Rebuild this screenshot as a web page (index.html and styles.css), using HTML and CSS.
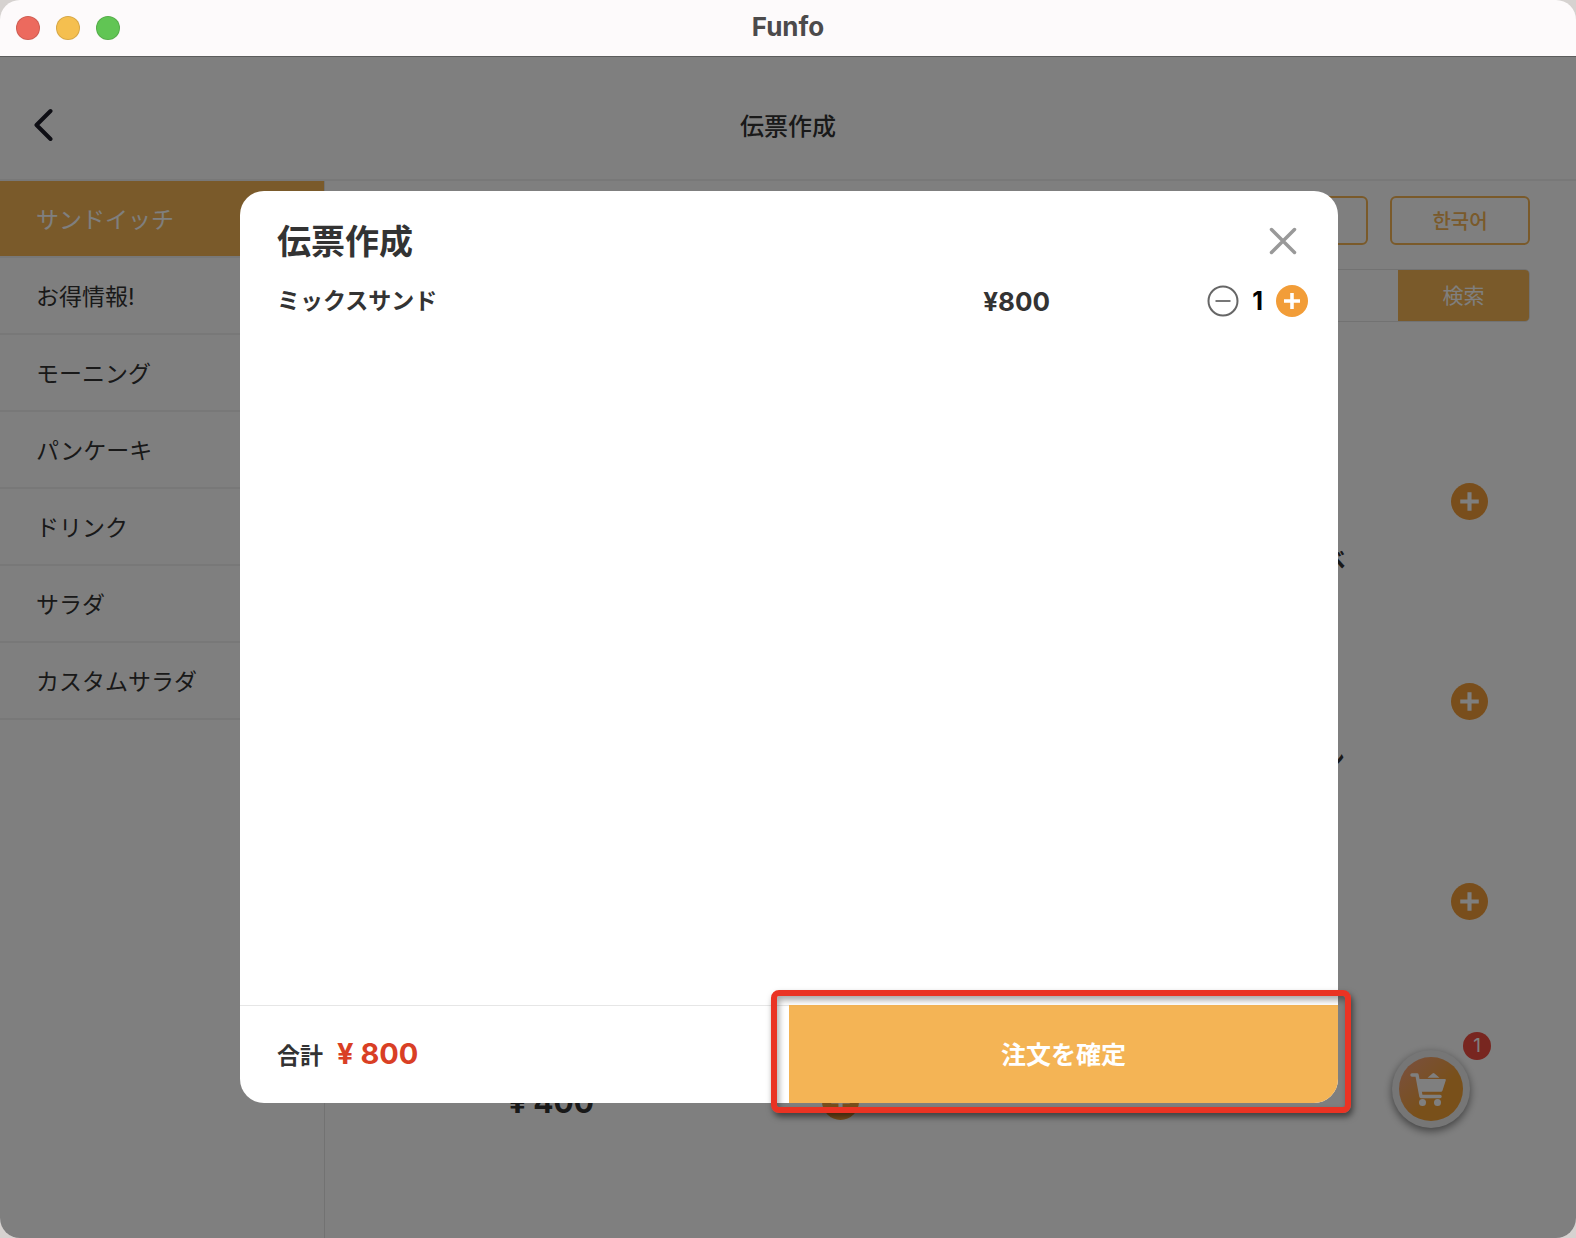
FILE: index.html
```html
<!DOCTYPE html>
<html lang="ja">
<head>
    <meta charset="UTF-8">
    <meta name="viewport" content="width=device-width, initial-scale=1.0">
    <title>Funfo</title>
    <link rel="stylesheet" href="styles.css">
</head>
<body>
    <svg class="sprite" aria-hidden="true">
        <symbol id="plus" viewBox="0 0 36 36">
            <circle cx="18" cy="18" r="18" fill="#f29d38"/>
            <path d="M18 9v18M9 18h18" stroke="#fff" stroke-width="4"/>
        </symbol>
    </svg>

    <div class="window">
        <div class="titlebar">
            <div class="lights">
                <span class="light red"></span>
                <span class="light yellow"></span>
                <span class="light green"></span>
            </div>
            <span class="app-name">Funfo</span>
        </div>

        <div class="app">
            <header class="header">
                <button class="back" aria-label="戻る">
                    <svg width="22" height="34" viewBox="0 0 22 34"><path d="M18.500 4L4.500 18l14 14" fill="none" stroke="#1c1c28" stroke-width="4" stroke-linecap="round" stroke-linejoin="round"/></svg>
                </button>
                <h1>伝票作成</h1>
            </header>

            <div class="main">
                <nav class="sidebar">
                    <a href="#" class="active">サンドイッチ</a>
                    <a href="#">お得情報!</a>
                    <a href="#">モーニング</a>
                    <a href="#">パンケーキ</a>
                    <a href="#">ドリンク</a>
                    <a href="#">サラダ</a>
                    <a href="#">カスタムサラダ</a>
                </nav>

                <div class="content">
                    <div class="langs">
                        <button class="lang">中文</button>
                        <button class="lang">한국어</button>
                    </div>
                    <form class="search">
                        <input type="text" aria-label="検索">
                        <button type="button">検索</button>
                    </form>

                    <div class="menu">
                        <div class="item">
                            <span class="name">ミックスサンド</span>
                            <span class="price">¥ 800</span>
                            <button class="add" aria-label="追加"><svg><use href="#plus"/></svg></button>
                        </div>
                        <div class="item">
                            <span class="name">ハムサンド</span>
                            <span class="price">¥ 400</span>
                            <button class="add" aria-label="追加"><svg><use href="#plus"/></svg></button>
                        </div>
                        <div class="item">
                            <span class="name">チキンサンド</span>
                            <span class="price">¥ 400</span>
                            <button class="add" aria-label="追加"><svg><use href="#plus"/></svg></button>
                        </div>
                        <div class="item">
                            <span class="name">ハムサンド食べ比べ</span>
                            <span class="price">¥ 800</span>
                            <button class="add" aria-label="追加"><svg><use href="#plus"/></svg></button>
                        </div>
                        <div class="item">
                            <span class="name">たまごサンド</span>
                            <span class="price">¥ 400</span>
                            <button class="add" aria-label="追加"><svg><use href="#plus"/></svg></button>
                        </div>
                        <div class="item">
                            <span class="name">ホットサンドチキン</span>
                            <span class="price">¥ 400</span>
                            <button class="add" aria-label="追加"><svg><use href="#plus"/></svg></button>
                        </div>
                        <div class="item">
                            <span class="name">野菜サンド</span>
                            <span class="price">¥ 400</span>
                            <button class="add" aria-label="追加"><svg><use href="#plus"/></svg></button>
                        </div>
                    </div>
                </div>
            </div>

            <button class="cart" aria-label="カート">
                <span class="cart-icon">
                    <svg width="36" height="34" viewBox="0 0 36 34" fill="#fff">
                        <path d="M2 3h5l4 21.500h19" fill="none" stroke="#fff" stroke-width="3.500" stroke-linecap="round" stroke-linejoin="round"/>
                        <path d="M8 7h27q1 0 .8 1.200L32.500 18.500q-.4 1.300-1.500 1.300H11z"/>
                        <path d="M17.500 5.800l5-4.300q1-1 2 0l5 4.300z"/>
                        <circle cx="12.500" cy="30.500" r="3.500"/>
                        <circle cx="27.500" cy="30.500" r="3.500"/>
                    </svg>
                </span>
                <span class="badge">1</span>
            </button>

            <div class="overlay">
                <div class="modal" role="dialog" aria-labelledby="modal-title">
                    <div class="modal-head">
                        <h2 id="modal-title">伝票作成</h2>
                        <button class="close" aria-label="閉じる">
                            <svg width="28" height="28" viewBox="0 0 28 28"><path d="M2.500 2.500l23 23M25.500 2.500l-23 23" stroke="#999" stroke-width="3.500" stroke-linecap="round"/></svg>
                        </button>
                    </div>
                    <div class="order">
                        <span class="order-name">ミックスサンド</span>
                        <span class="order-price">¥800</span>
                        <div class="qty">
                            <button aria-label="減らす">
                                <svg viewBox="0 0 32 32"><circle cx="16" cy="16" r="14.500" fill="none" stroke="#666" stroke-width="2"/><path d="M8.500 16h15" stroke="#777" stroke-width="2"/></svg>
                            </button>
                            <span>1</span>
                            <button aria-label="増やす"><svg><use href="#plus"/></svg></button>
                        </div>
                    </div>
                    <div class="modal-foot">
                        <div class="total">合計 <strong>¥ 800</strong></div>
                        <div class="confirm">
                            <button>注文を確定</button>
                        </div>
                    </div>
                </div>
            </div>
        </div>
    </div>
</body>
</html>
```

FILE: styles.css
```css
* {
    box-sizing: border-box;
}
body {
    margin: 0;
    background: #d6d2d0;
    font-family: Inter, 'Noto Sans CJK JP', sans-serif;
    color: #333;
}
button {
    padding: 0;
    border: none;
    background: none;
    font-family: inherit;
    cursor: pointer;
}
svg {
    display: block;
}
.sprite {
    position: absolute;
    width: 0;
    height: 0;
}
.window {
    display: flex;
    flex-direction: column;
    height: 100vh;
    border-radius: 20px;
    overflow: hidden;
}

/* title bar */
.titlebar {
    display: grid;
    grid-template-columns: 1fr auto 1fr;
    align-items: center;
    height: 57px;
    padding: 0 16px;
    background: #fdfafb;
    border-bottom: 1px solid #5c5c5c;
}
.lights {
    display: flex;
    gap: 16px;
}
.light {
    width: 24px;
    height: 24px;
    border-radius: 50%;
    border: 1px solid rgba(0, 0, 0, 0.12);
}
.red {
    background: #ec6a5e;
}
.yellow {
    background: #f5bf4f;
}
.green {
    background: #61c554;
}
.app-name {
    padding-bottom: 2px;
    font-size: 26px;
    line-height: 50px;
    font-weight: 700;
    color: #4c4a4b;
}

/* app */
.app {
    position: relative;
    flex: 1;
    display: flex;
    flex-direction: column;
    background: #fff;
    min-height: 0;
}
.header {
    display: grid;
    grid-template-columns: 1fr auto 1fr;
    align-items: center;
    height: 124px;
    padding: 12px 32px 0;
    border-bottom: 2px solid #f0f0f0;
}
.back {
    justify-self: start;
}
.header h1 {
    margin: 0;
    font-size: 24px;
    font-weight: 500;
}
.main {
    flex: 1;
    display: flex;
    min-height: 0;
}
.sidebar {
    width: 325px;
    flex-shrink: 0;
    border-right: 1px solid #e4e4e4;
}
.sidebar a {
    display: block;
    height: 77px;
    padding: 1px 0 0 36px;
    border-bottom: 2px solid #f0f0f0;
    font-size: 23px;
    line-height: 76px;
    color: #333;
    text-decoration: none;
}
.sidebar .active {
    background: #f4b455;
    color: #fff;
}
.content {
    flex: 1;
    padding: 15px 46px 0;
    overflow: hidden;
}
.langs {
    display: flex;
    justify-content: flex-end;
    gap: 22px;
}
.lang {
    width: 140px;
    height: 49px;
    border: 2px solid #f4b455;
    border-radius: 6px;
    font-family: Inter, 'Noto Sans CJK KR', sans-serif;
    font-size: 20px;
    font-weight: 500;
    color: #f4b455;
}
.search {
    display: flex;
    height: 53px;
    margin-top: 24px;
    border: 1px solid #e4e4e4;
    border-radius: 5px;
    overflow: hidden;
}
.search input {
    flex: 1;
    border: none;
}
.search button {
    width: 131px;
    padding-bottom: 3px;
    background: #f4b455;
    font-size: 21px;
    color: #fff;
}
.menu {
    display: grid;
    grid-template-columns: 1fr 1fr;
    column-gap: 100px;
    margin-top: 20px;
}
.item {
    display: grid;
    grid-template-columns: 1fr auto;
    align-content: space-between;
    align-items: center;
    height: 178px;
    margin-bottom: 22px;
    padding: 0 42px 0 138px;
}
.name {
    grid-column: 1 / 3;
    font-size: 23px;
    line-height: 36px;
    font-weight: 700;
    white-space: nowrap;
}
.price {
    font-size: 30px;
    line-height: 36px;
    font-weight: 700;
}
.add svg {
    width: 37px;
    height: 37px;
}

/* floating cart */
.cart {
    position: absolute;
    right: 106px;
    bottom: 110px;
    width: 78px;
    height: 78px;
    padding: 7px;
    border-radius: 50%;
    background: #ececec;
    box-shadow: 0 3px 8px rgba(0, 0, 0, 0.5);
}
.cart-icon {
    display: flex;
    align-items: center;
    justify-content: center;
    height: 64px;
    padding-right: 6px;
    border-radius: 50%;
    background: linear-gradient(135deg, #f4a176 10%, #f2a034 60%, #f2a034);
}
.badge {
    position: absolute;
    top: -18px;
    right: -21px;
    width: 28px;
    height: 28px;
    border-radius: 50%;
    background: #f04c40;
    font-size: 19px;
    line-height: 28px;
    color: #fff;
}

/* order dialog */
.overlay {
    position: absolute;
    inset: 0;
    display: flex;
    padding: 134px 238px 135px 240px;
    background: rgba(0, 0, 0, 0.5);
}
.modal {
    flex: 1;
    display: flex;
    flex-direction: column;
    border-radius: 24px;
    background: #fff;
}
.modal-head {
    display: flex;
    align-items: center;
    justify-content: space-between;
    padding: 25px 41px 0 37px;
}
.modal-head h2 {
    margin: 0;
    padding-top: 2px;
    font-size: 34px;
    line-height: 48px;
    font-weight: 700;
}
.order {
    flex: 1;
    display: grid;
    grid-template-columns: 1fr auto 288px;
    align-content: start;
    align-items: center;
    padding: 19px 0 0 37px;
}
.order-name {
    font-size: 23px;
    line-height: 32px;
    font-weight: 700;
}
.order-price {
    font-size: 26px;
    font-weight: 700;
}
.qty {
    display: flex;
    align-items: center;
    justify-content: flex-end;
    gap: 13px;
    padding-right: 30px;
    font-size: 25px;
    font-weight: 700;
    color: #000;
}
.qty svg {
    width: 32px;
    height: 32px;
}
.modal-foot {
    display: flex;
    height: 98px;
}
.total {
    flex: 1;
    display: flex;
    align-items: center;
    gap: 14px;
    padding: 0 0 2px 37px;
    border-top: 1px solid #e6e6e6;
    font-size: 23px;
    font-weight: 700;
}
.total strong {
    font-size: 29px;
    font-weight: 700;
    color: #d93f25;
}
.confirm {
    position: relative;
    width: 50%;
}
.confirm button {
    width: 100%;
    height: 100%;
    padding-bottom: 2px;
    border-radius: 0 0 24px 0;
    background: #f4b455;
    font-size: 25px;
    font-weight: 700;
    color: #fff;
}
.confirm::after {
    content: '';
    position: absolute;
    inset: -15px -13px -10px -18px;
    border: 6px solid #ea3323;
    border-radius: 8px;
    box-shadow: 2px 4px 6px rgba(0, 0, 0, 0.5), inset 2px 4px 6px rgba(0, 0, 0, 0.35);
    pointer-events: none;
}
```
